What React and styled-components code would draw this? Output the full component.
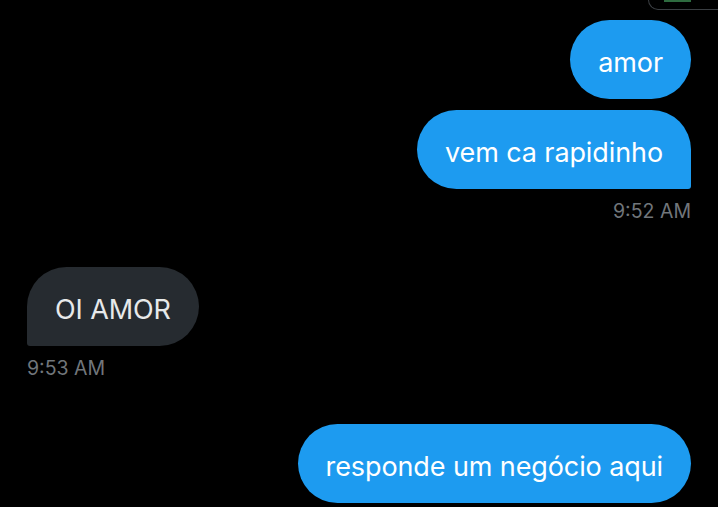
import React from 'react';
import styled, { createGlobalStyle } from 'styled-components';

const GlobalStyle = createGlobalStyle`
  html, body {
    margin: 0;
    padding: 0;
    background: #000;
  }
  body {
    font-family: Inter, "Liberation Sans", Arial, sans-serif;
    -webkit-font-smoothing: antialiased;
  }
`;

const Screen = styled.div`
  width: 718px;
  height: 507px;
  overflow: hidden;
  background: #000;
  box-sizing: border-box;
  padding: 0 27px 0 27px;
  display: flex;
  flex-direction: column;
`;

const CardEdge = styled.div`
  align-self: flex-end;
  margin-right: -27px;
  width: 70px;
  height: 10px;
  box-sizing: border-box;
  border-left: 1px solid #3a3e42;
  border-bottom: 1px solid #3a3e42;
  border-bottom-left-radius: 26px;
  position: relative;
`;

const GreenLine = styled.div`
  position: absolute;
  top: 0;
  left: 15px;
  width: 27px;
  height: 2px;
  background: #2e6b3f;
`;

const Group = styled.div`
  display: flex;
  flex-direction: column;
  align-items: ${(p) => (p.$mine ? 'flex-end' : 'flex-start')};
  gap: 11px;
  margin-top: ${(p) => p.$top}px;
`;

const Bubble = styled.div`
  box-sizing: border-box;
  height: 79px;
  padding: 6px 28px 0;
  display: flex;
  align-items: center;
  font-size: 27px;
  letter-spacing: -0.1px;
  white-space: nowrap;
  border-radius: 40px;
  background: ${(p) => (p.$mine ? '#1d9bf0' : '#262b30')};
  color: ${(p) => (p.$mine ? '#ffffff' : '#e7e9ea')};
  ${(p) => p.$tail === 'right' && 'border-bottom-right-radius: 3px;'}
  ${(p) => p.$tail === 'left' && 'border-bottom-left-radius: 3px;'}
`;

const Time = styled.div`
  font-size: 19.5px;
  color: #71767b;
  line-height: 22px;
`;

export default function App() {
  return (
    <>
      <GlobalStyle />
      <Screen>
        <CardEdge>
          <GreenLine />
        </CardEdge>
        <Group $mine $top={10}>
          <Bubble $mine>amor</Bubble>
          <Bubble $mine $tail="right">vem ca rapidinho</Bubble>
          <Time>9:52 AM</Time>
        </Group>
        <Group $top={45}>
          <Bubble $tail="left">OI AMOR</Bubble>
          <Time>9:53 AM</Time>
        </Group>
        <Group $mine $top={45}>
          <Bubble $mine>responde um negócio aqui</Bubble>
        </Group>
      </Screen>
    </>
  );
}
